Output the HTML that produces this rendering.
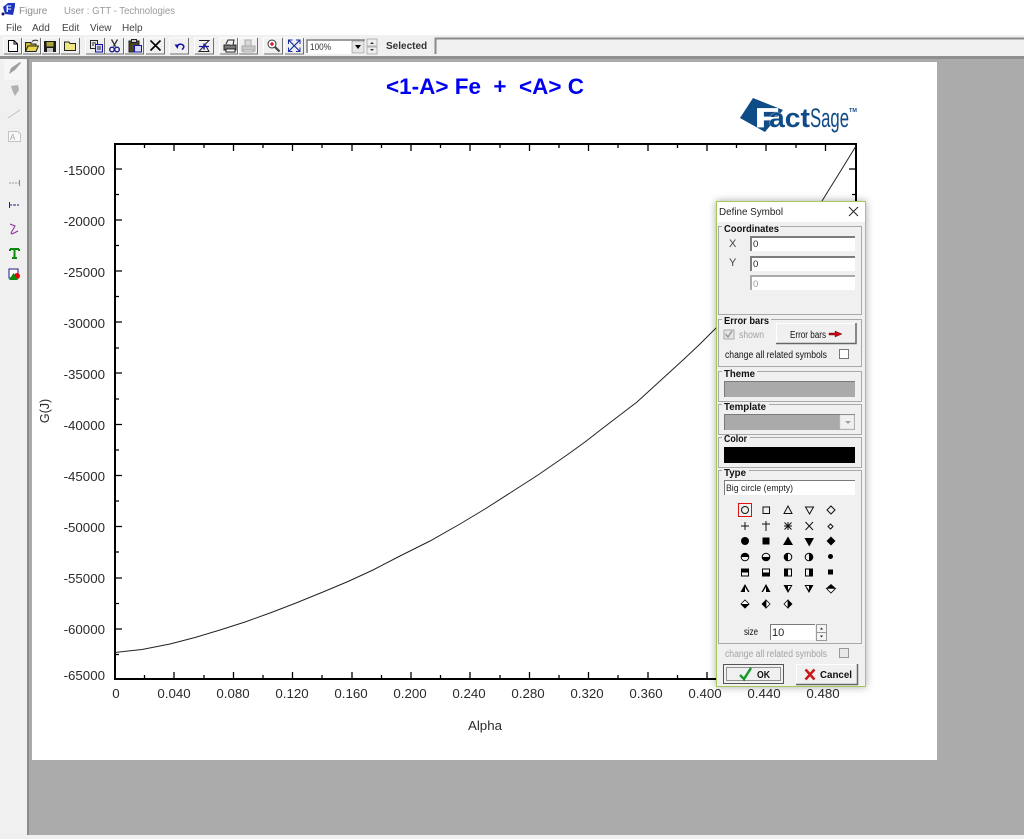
<!DOCTYPE html>
<html>
<head>
<meta charset="utf-8">
<title>Figure</title>
<style>
html,body{margin:0;padding:0;background:#fff;width:1024px;height:839px;overflow:hidden}
svg{display:block}
text{font-family:"Liberation Sans",sans-serif;white-space:pre}
.lb{font-size:13.3px;fill:#2b2b2b}
.d{font-size:10px;fill:#111}
.g{font-size:10px;fill:#a3a3a3}
.b{font-size:10px;font-weight:bold;fill:#111}
.m{font-size:10px;fill:#444}
.fr{fill:none;stroke:#a8a8a8;stroke-width:1}
.lg{fill:#f0f0f0}
.sd{fill:none;stroke:#7d7d7d;stroke-width:2}
.sl{fill:none;stroke:#fff;stroke-width:1}
.dk{fill:none;stroke:#6e6e6e;stroke-width:1}
</style>
</head>
<body>
<svg xmlns="http://www.w3.org/2000/svg" width="1024" height="839" viewBox="0 0 1024 839">
<!-- window chrome -->
<rect width="1024" height="839" fill="#fff"/>
<rect y="35" width="1024" height="804" fill="#f0f0f0"/>
<rect y="56" width="1024" height="3" fill="#8f8f8f"/>
<rect x="27" y="59" width="997" height="776" fill="#ababab"/>
<rect x="27" y="59" width="2" height="776" fill="#8a8a8a"/>
<rect y="835" width="1024" height="4" fill="#efefef"/>
<rect x="32" y="62" width="905" height="698" fill="#fff"/>

<!-- title bar -->
<path d="M3 7L8 3H15V6L13 15L5 14Z" fill="#1c34c0"/>
<text x="6" y="12" font-size="9" font-weight="bold" fill="#fff">F</text>
<circle cx="3" cy="14" r="1.500" fill="#101060"/>
<text x="19" y="14" font-size="10" fill="#8c8c8c">Figure</text>
<text x="64" y="14" font-size="10" fill="#9a9a9a" textLength="111" lengthAdjust="spacingAndGlyphs">User : GTT - Technologies</text>
<text x="6" y="31" class="m">File</text>
<text x="32" y="31" class="m">Add</text>
<text x="62" y="31" class="m">Edit</text>
<text x="90" y="31" class="m">View</text>
<text x="122" y="31" class="m">Help</text>

<!-- toolbar buttons -->
<path stroke="#fff" fill="none" d="M3.500 53V38H21M22.500 53V38H40M41.500 53V38H59M60.500 53V38H79M85.500 53V38H104M104.500 53V38H123M124.500 53V38H143M145.500 53V38H164M169.500 53V38H188M194.500 53V38H213M219.500 53V38H237M238.500 53V38H257M263.500 53V38H282M284.500 53V38H303"/>
<path stroke="#707070" fill="none" d="M21.500 38V54H4M40.500 38V54H23M59.500 38V54H42M79.500 38V54H61M104.500 38V54H86M123.500 38V54H105M143.500 38V54H125M164.500 38V54H146M188.500 38V54H170M213.500 38V54H195M237.500 38V54H220M257.500 38V54H239M282.500 38V54H264M303.500 38V54H285"/>
<!-- new -->
<path d="M8.500 40.500H14L17.500 44V51.500H8.500Z" fill="#fff" stroke="#000"/><path d="M14 40.500V44H17.500" fill="none" stroke="#000"/>
<!-- open -->
<path d="M25.500 42.500H31V44H36V51.500H25.500Z" fill="#c9bb3a" stroke="#222"/><path d="M25.500 51.500L28 46H38.500L36 51.500Z" fill="#e4d84f" stroke="#222"/><path d="M32 41.500Q35 39 38 41" fill="none" stroke="#222"/>
<!-- save -->
<rect x="44" y="41" width="12" height="11" fill="#1a1a1a"/><rect x="46.500" y="42" width="7" height="4.500" fill="#a9a440"/><rect x="47" y="48" width="6" height="4" fill="#c6c6c6"/>
<!-- folder -->
<path d="M64.500 43.500V42H69L70 43.500H75.500V50.500H64.500Z" fill="#efe680" stroke="#222"/>
<!-- copy -->
<rect x="90.500" y="40.500" width="7" height="8" fill="#e8e8e8" stroke="#222"/><rect x="95.500" y="44.500" width="7" height="7.500" fill="#d8d8ff" stroke="#1414a0"/><path d="M92 43H96M92 45H94M97 47H101M97 49H101" stroke="#222"/>
<!-- cut -->
<path d="M111.500 39.500L115.500 46.500M117.500 39.500L113.500 46.500" stroke="#333" fill="none" stroke-width="1.300"/><circle cx="112" cy="49.500" r="2.300" fill="none" stroke="#1a1a8a" stroke-width="1.400"/><circle cx="117" cy="49.500" r="2.300" fill="none" stroke="#1a1a8a" stroke-width="1.400"/>
<!-- paste -->
<rect x="129" y="41" width="10" height="11" fill="#4a4420" stroke="#222"/><rect x="131.500" y="39.500" width="5" height="3" fill="#ccc" stroke="#222"/><rect x="134.500" y="45.500" width="7" height="6.500" fill="#d8d8ff" stroke="#1414a0"/>
<!-- delete -->
<path d="M150.500 40.500L160.500 50.500M160.500 40.500L150.500 50.500" stroke="#000" stroke-width="1.600"/>
<!-- undo -->
<path d="M174.500 44.500L177.500 49L179 44.500Z" fill="#1414a8"/><path d="M177 46Q180 42.500 183.500 45.500Q184.500 47.500 182 49.500" fill="none" stroke="#1414a8" stroke-width="1.500"/>
<!-- refresh -->
<path d="M199 40.500H209L205 44.500L209 51.500H199L203 47" fill="none" stroke="#222"/><path d="M199 46.500H209" stroke="#1414a8" stroke-width="1.200"/><path d="M204 43.500V49.500" stroke="#1414a8" stroke-width="1.500"/>
<!-- print -->
<rect x="224" y="45" width="12" height="5" fill="#777" stroke="#222"/><path d="M226 44L228 40H234L233 45" fill="#eee" stroke="#222"/><rect x="226" y="49" width="9" height="3" fill="#fff" stroke="#222"/>
<!-- print disabled -->
<rect x="242" y="46" width="13" height="5" fill="#c8c8c8" stroke="#a8a8a8"/><rect x="245" y="40" width="6" height="6" fill="#d8d8d8" stroke="#aaa"/><rect x="243" y="50" width="10" height="2" fill="#e8e8e8" stroke="#aaa"/>
<!-- zoom -->
<circle cx="272" cy="44" r="4" fill="#fff" stroke="#333"/><path d="M270 44H274M272 42V46" stroke="#d00010" stroke-width="1.300"/><path d="M275 47L279.500 51.500" stroke="#444" stroke-width="2.200"/>
<!-- fit -->
<path d="M289 40.500L299.500 51M299.500 40.500L289 51" stroke="#1a2ca8" stroke-width="1.200"/><path d="M288.500 44V40H292.500M296 40H300V44M300 47.500V51.500H296M292.500 51.500H288.500V47.500" fill="none" stroke="#1a2ca8"/>

<!-- combo -->
<rect x="306" y="39" width="59" height="15" fill="#fff"/>
<path d="M307 53V40H365" class="sd" style="stroke-width:1.500"/>
<rect x="352" y="41" width="12" height="12" fill="#e6e6e6" stroke="#888" stroke-width=".6"/>
<path d="M355 45H361L358 49Z" fill="#000"/>
<text x="310" y="50" font-size="9.500" fill="#333" textLength="21" lengthAdjust="spacingAndGlyphs">100%</text>
<rect x="367" y="39" width="10" height="7" fill="#eee" stroke="#999" stroke-width=".7"/>
<rect x="367" y="47" width="10" height="7" fill="#eee" stroke="#999" stroke-width=".7"/>
<path d="M370 44H374L372 42ZM370 49H374L372 51Z" fill="#333"/>
<text x="386" y="49" font-size="10" font-weight="bold" fill="#333">Selected</text>
<path d="M435.500 54V38.500H1024" fill="none" stroke="#8a8a8a" stroke-width="2"/>

<!-- left toolbar -->
<rect x="4" y="60" width="22" height="20" fill="#f6f6f6"/>
<path d="M9 74L11 68L20 62L21 63L15 70Z" fill="#a0a0a0"/>
<path d="M11 86L18 85L19 90L15 96L13 92Z" fill="#b0b0b0"/>
<path d="M8 118L20 110" stroke="#c0c0c0"/>
<path d="M8.500 141.500V131.500H18L20.500 134V141.500Z" fill="#f8f8f8" stroke="#c4c4c4"/>
<text x="10" y="140" font-size="8" fill="#a6a6a6">A</text>
<path d="M9 183H19" stroke="#9a9a9a" stroke-dasharray="2 1"/><path d="M19.500 180V186" stroke="#888"/>
<path d="M9 205H19" stroke="#20208a" stroke-dasharray="3 1"/><path d="M9.500 202V208" stroke="#20208a"/>
<path d="M10 224L15 226L11 233L12 234L18 231" fill="none" stroke="#8a2a9a"/>
<path d="M10 249H19M14.500 249V258M12 258H17M10 249V251M19 249V251" stroke="#0a8a0a" stroke-width="2" fill="none"/>
<rect x="9" y="269" width="9" height="9" fill="#fff" stroke="#1a1a8a"/>
<circle cx="17" cy="276" r="3" fill="#f00000"/>
<path d="M9 280L13.500 273L18 280Z" fill="#0a8a0a"/>

<!-- chart -->
<text x="386" y="94" font-size="22" font-weight="bold" fill="#0000f0" textLength="198" lengthAdjust="spacingAndGlyphs">&lt;1-A&gt; Fe  +  &lt;A&gt; C</text>

<!-- logo -->
<path d="M753 98L740 118L765 132L783 110Z" fill="#0f4b86"/>
<text x="755" y="127" font-size="27" font-weight="bold" fill="#fff" stroke="#fff" stroke-width=".8" textLength="24" lengthAdjust="spacingAndGlyphs">F</text>
<text x="769" y="127" font-size="27" font-weight="bold" fill="#0f4b86" stroke="#fff" stroke-width=".5" paint-order="stroke" textLength="41" lengthAdjust="spacingAndGlyphs">act</text>
<text x="810" y="127" font-size="27" fill="#0f4b86" textLength="39" lengthAdjust="spacingAndGlyphs">Sage</text>
<text x="849" y="112" font-size="5.500" font-weight="bold" fill="#0f4b86">TM</text>

<path d="M115 144H856V679H115Z" fill="none" stroke="#000" stroke-width="2"/>
<g stroke="#000" stroke-width="1.300" fill="none">
<path d="M115 169H122M115 220H122M115 271H122M115 322H122M115 373H122M115 424.500H122M115 475.500H122M115 526.500H122M115 578H122M115 629H122"/>
<path d="M115 194.500H119M115 245.500H119M115 296.500H119M115 348H119M115 399H119M115 450H119M115 501H119M115 552H119M115 603.500H119M115 654.500H119"/>
<path d="M856 169H849M856 220H849M856 271H849"/>
<path d="M856 194.500H852M856 245.500H852M856 296.500H852"/>
<path d="M174 679V672M233.500 679V672M292.500 679V672M352 679V672M411 679V672M470 679V672M529.500 679V672M588.500 679V672M648 679V672M707 679V672"/>
<path d="M144.500 679V675M204 679V675M263 679V675M322 679V675M381.500 679V675M440.500 679V675M500 679V675M559 679V675M618 679V675M677.500 679V675"/>
<path d="M174 144V151M233.500 144V151M292.500 144V151M352 144V151M411 144V151M470 144V151M529.500 144V151M588.500 144V151M648 144V151M707 144V151M766 144V151M825.500 144V151"/>
<path d="M144.500 144V148M204 144V148M263 144V148M322 144V148M381.500 144V148M440.500 144V148M500 144V148M559 144V148M618 144V148M677.500 144V148M736.500 144V148M796 144V148"/>
</g>
<path d="M115 652.500L142 649.500L170 644L195 637.500L220 630L245 622L270 613L296 603L323 592L348 581.500L373 570L400 556L430 541L460 524L485 509L510 493L538 475L567 455L585 442L603 428L620 415L637 402L660 381L683 360L700 344L716 328L740 302L766 271L795 236L822 201L840 172L856 146" fill="none" stroke="#222" stroke-width="1"/>

<g class="lb" text-anchor="end">
<text x="105" y="175" class="lb">-15000</text>
<text x="105" y="226" class="lb">-20000</text>
<text x="105" y="277" class="lb">-25000</text>
<text x="105" y="328" class="lb">-30000</text>
<text x="105" y="379" class="lb">-35000</text>
<text x="105" y="430" class="lb">-40000</text>
<text x="105" y="481" class="lb">-45000</text>
<text x="105" y="532" class="lb">-50000</text>
<text x="105" y="583" class="lb">-55000</text>
<text x="105" y="634" class="lb">-60000</text>
<text x="105" y="680" class="lb">-65000</text>
</g>
<g text-anchor="middle">
<text x="116" y="698" class="lb">0</text>
<text x="174" y="698" class="lb">0.040</text>
<text x="233" y="698" class="lb">0.080</text>
<text x="292" y="698" class="lb">0.120</text>
<text x="351" y="698" class="lb">0.160</text>
<text x="410" y="698" class="lb">0.200</text>
<text x="469" y="698" class="lb">0.240</text>
<text x="528" y="698" class="lb">0.280</text>
<text x="587" y="698" class="lb">0.320</text>
<text x="646" y="698" class="lb">0.360</text>
<text x="705" y="698" class="lb">0.400</text>
<text x="764" y="698" class="lb">0.440</text>
<text x="823" y="698" class="lb">0.480</text>
<text x="485" y="730" class="lb">Alpha</text>
<text transform="translate(49 411) rotate(-90)" class="lb" style="font-size:12.500px">G(J)</text>
</g>

<!-- dialog -->
<rect x="716.500" y="201.500" width="149" height="485" fill="#f0f0f0" stroke="#a6c85a" style="filter:drop-shadow(0 0 4px rgba(0,0,0,.35))"/>
<rect x="717" y="202" width="148" height="20" fill="#fff"/>
<text x="719" y="215" font-size="10.500" fill="#222" textLength="64" lengthAdjust="spacingAndGlyphs">Define Symbol</text>
<path d="M849 207L858 216M858 207L849 216" stroke="#222" stroke-width="1"/>

<!-- groups -->
<rect x="718.500" y="226.500" width="143" height="88" class="fr"/>
<rect x="722" y="224" width="58" height="8" class="lg"/>
<text x="724" y="232" class="b" textLength="55" lengthAdjust="spacingAndGlyphs">Coordinates</text>
<text x="729" y="247" font-size="11" fill="#444">X</text>
<text x="729" y="266" font-size="11" fill="#444">Y</text>
<rect x="750" y="236" width="105" height="15" fill="#fff"/><path d="M751 251V237H855" class="sd"/>
<rect x="750" y="256" width="105" height="15" fill="#fff"/><path d="M751 271V257H855" class="sd"/>
<rect x="750" y="275" width="105" height="15" fill="#fff"/><path d="M751 290V276H855" class="sd" style="stroke:#aaa"/>
<text x="753" y="247" font-size="9.500" fill="#222">0</text>
<text x="753" y="267" font-size="9.500" fill="#222">0</text>
<text x="753" y="287" font-size="9.500" fill="#999">0</text>

<rect x="718.500" y="319.500" width="143" height="47" class="fr"/>
<rect x="722" y="316" width="49" height="8" class="lg"/>
<text x="724" y="324" class="b" textLength="45" lengthAdjust="spacingAndGlyphs">Error bars</text>
<rect x="724" y="330" width="10" height="9" fill="#e6e6e6" stroke="#aaa"/>
<path d="M725.500 334L728 337L732 331" fill="none" stroke="#9a9a9a" stroke-width="1.500"/>
<text x="739" y="338" class="g" textLength="25" lengthAdjust="spacingAndGlyphs">shown</text>
<rect x="776" y="323" width="80" height="20" fill="#f0f0f0"/>
<path d="M776.500 343V323.500H856" class="sl"/><path d="M856 323V343.500H776" stroke="#666" fill="none" stroke-width="1.500"/>
<text x="790" y="338" class="d" textLength="36" lengthAdjust="spacingAndGlyphs">Error bars</text>
<path d="M829 333H835V331L842 334L835 337V335H829Z" fill="#d00010" stroke="#400" stroke-width=".4"/>
<text x="725" y="358" class="d" textLength="102" lengthAdjust="spacingAndGlyphs">change all related symbols</text>
<rect x="839.500" y="349.500" width="9" height="9" fill="#fff" stroke="#777"/>

<rect x="718.500" y="371.500" width="143" height="30" class="fr"/>
<rect x="722" y="369" width="35" height="8" class="lg"/>
<text x="724" y="377" class="b" textLength="31" lengthAdjust="spacingAndGlyphs">Theme</text>
<rect x="724" y="381" width="131" height="16" fill="#aaa"/>
<path d="M724.500 397V381.500H855" fill="none" stroke="#7a7a7a"/>

<rect x="718.500" y="404.500" width="143" height="30" class="fr"/>
<rect x="722" y="402" width="47" height="8" class="lg"/>
<text x="724" y="410" class="b" textLength="42" lengthAdjust="spacingAndGlyphs">Template</text>
<rect x="724" y="414" width="131" height="16" fill="#aaa"/>
<path d="M724.500 430V414.500H855" fill="none" stroke="#7a7a7a"/>
<rect x="840" y="415" width="14" height="14" fill="#f0f0f0" stroke="#ccc" stroke-width=".5"/>
<path d="M845 421H851L848 424Z" fill="#a0a0a0"/>

<rect x="718.500" y="437.500" width="143" height="30" class="fr"/>
<rect x="722" y="435" width="28" height="8" class="lg"/>
<text x="724" y="442" class="b" textLength="23" lengthAdjust="spacingAndGlyphs">Color</text>
<rect x="724" y="447" width="131" height="16" fill="#000"/>

<rect x="718.500" y="470.500" width="143" height="173" class="fr"/>
<rect x="722" y="468" width="27" height="8" class="lg"/>
<text x="724" y="476" class="b" textLength="22" lengthAdjust="spacingAndGlyphs">Type</text>
<rect x="724" y="480" width="131" height="15" fill="#fff"/>
<path d="M724.500 495V480.500H855" fill="none" stroke="#7a7a7a"/>
<text x="726" y="491" font-size="9.500" fill="#222" textLength="67" lengthAdjust="spacingAndGlyphs">Big circle (empty)</text>

<rect x="738.500" y="503.500" width="13" height="13" fill="none" stroke="#e01010"/>
<!-- symbols row 1 -->
<g fill="none" stroke="#111">
<circle cx="745" cy="510" r="3.500"/>
<rect x="763" y="507" width="6.500" height="6.500"/>
<path d="M788 506L792 513.500H784Z"/>
<path d="M805.500 507H813.500L809.500 514Z"/>
<path d="M831 506L835 510L831 514L827 510Z"/>
<!-- row 2 -->
<path d="M741 526H749M745 522V530"/>
<path d="M762 524H770M766 521V531"/>
<path d="M784.500 522.500L791.500 529.500M791.500 522.500L784.500 529.500M784 526H792M788 522V530"/>
<path d="M805.500 522L813 530M813 522L805.500 530"/>
<path d="M830.500 524L833 526.500L830.500 529L828 526.500Z"/>
</g>
<g fill="#000">
<!-- row 3 -->
<circle cx="745" cy="541" r="4"/>
<rect x="762.500" y="537.500" width="7" height="7"/>
<path d="M788 536.500L793 545H783Z"/>
<path d="M804.500 538H814L809.300 546.500Z"/>
<path d="M831 536.500L835.500 541L831 545.500L826.500 541Z"/>
<!-- row 4 half circles -->
<path d="M741 557A4 4 0 0 1 749 557Z"/><circle cx="745" cy="557" r="3.800" fill="none" stroke="#000"/>
<path d="M762 557A4 4 0 0 0 770 557Z"/><circle cx="766" cy="557" r="3.800" fill="none" stroke="#000"/>
<path d="M788 553A4 4 0 0 0 788 561Z"/><circle cx="788" cy="557" r="3.800" fill="none" stroke="#000"/>
<path d="M809 553A4 4 0 0 1 809 561Z"/><circle cx="809" cy="557" r="3.800" fill="none" stroke="#000"/>
<circle cx="830.500" cy="556.500" r="2.500"/>
<!-- row 5 half squares -->
<path d="M741.500 569H749V572.500H741.500Z"/><rect x="741.500" y="569" width="7" height="7" fill="none" stroke="#000"/>
<path d="M762.500 572.500H770V576H762.500Z"/><rect x="762.500" y="569" width="7" height="7" fill="none" stroke="#000"/>
<path d="M784.500 569H788V576H784.500Z"/><rect x="784.500" y="569" width="7" height="7" fill="none" stroke="#000"/>
<path d="M809 569H813V576H809Z"/><rect x="805.500" y="569" width="7" height="7" fill="none" stroke="#000"/>
<rect x="828" y="569.500" width="5" height="5"/>
<!-- row 6 half triangles -->
<path d="M745 584L749.500 592H740.500Z"/><path d="M745 587V592H748L745 587Z" fill="#fff"/>
<path d="M766 584L770.500 592H761.500Z"/><path d="M766 587V592H763L766 587Z" fill="#fff"/>
<path d="M783.500 585H792.500L788 593Z"/><path d="M788 586H791L788 590Z" fill="#fff"/>
<path d="M804.500 585H813.500L809 593Z"/><path d="M809 586H806L809 590Z" fill="#fff"/>
<path d="M826.500 588H835.500L831 584Z"/><path d="M826.500 588.500H835.500L831 593Z" fill="#fff" stroke="#000" stroke-width=".8"/>
<!-- row 7 -->
<path d="M741 604L745 600L749 604L745 608Z" fill="#fff" stroke="#000" stroke-width=".8"/><path d="M740.500 604H749.500L745 608.500Z"/>
<path d="M766 599.500L761.500 604L766 608.500Z"/><path d="M766 600L770 604L766 608Z" fill="#fff" stroke="#000" stroke-width=".8"/>
<path d="M788 599.500L792.500 604L788 608.500Z"/><path d="M788 600L784 604L788 608Z" fill="#fff" stroke="#000" stroke-width=".8"/>
</g>

<text x="744" y="635" class="d" textLength="14" lengthAdjust="spacingAndGlyphs">size</text>
<rect x="770" y="624" width="45" height="16" fill="#fff"/>
<path d="M770.500 640V624.500H815" fill="none" stroke="#7a7a7a"/>
<text x="772" y="636" font-size="11" fill="#222">10</text>
<rect x="816.500" y="624.500" width="10" height="8" fill="#f4f4f4" stroke="#999"/>
<rect x="816.500" y="632.500" width="10" height="8" fill="#f4f4f4" stroke="#999"/>
<path d="M820 629.500H823L821.500 627.500ZM820 635.500H823L821.500 637.500Z" fill="#222"/>

<text x="725" y="657" class="g" textLength="102" lengthAdjust="spacingAndGlyphs">change all related symbols</text>
<rect x="839.500" y="648.500" width="9" height="9" fill="#e8e8e8" stroke="#999"/>

<!-- OK -->
<rect x="723.500" y="664.500" width="60" height="19" fill="#f0f0f0" stroke="#555"/>
<rect x="726.500" y="667.500" width="54" height="13" fill="none" stroke="#333" stroke-dasharray="1 1"/>
<path d="M740 675L744 679L751 668" fill="none" stroke="#1a9a2a" stroke-width="2.500"/>
<text x="757" y="678" class="b" textLength="13" lengthAdjust="spacingAndGlyphs">OK</text>
<!-- Cancel -->
<rect x="796" y="664" width="62" height="20" fill="#f0f0f0"/>
<path d="M796.500 684V664.500H858" class="sl"/><path d="M857.500 664V684.500H796" stroke="#666" fill="none" stroke-width="1.500"/>
<path d="M805.500 669.500L814.500 679.500M814.500 669.500L805.500 679.500" stroke="#c81818" stroke-width="2.500"/>
<text x="820" y="678" class="b" textLength="32" lengthAdjust="spacingAndGlyphs">Cancel</text>
</svg>
</body>
</html>
